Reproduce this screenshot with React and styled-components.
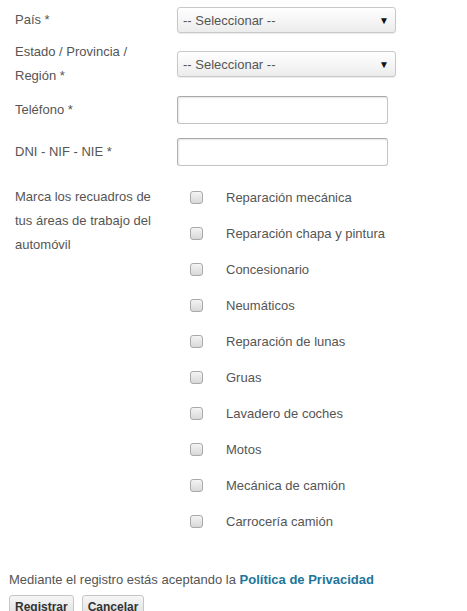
import React from "react";
import styled, { createGlobalStyle } from "styled-components";

const areas = [
  "Reparación mecánica",
  "Reparación chapa y pintura",
  "Concesionario",
  "Neumáticos",
  "Reparación de lunas",
  "Gruas",
  "Lavadero de coches",
  "Motos",
  "Mecánica de camión",
  "Carrocería camión",
];

function App() {
  return (
    <Page>
      <GlobalStyle />
      <Form>
        <Row $pad="7px 0">
          <Label>País *</Label>
          <Select>
            <span>-- Seleccionar --</span>
            <Arrow>▼</Arrow>
          </Select>
        </Row>
        <Row $pad="0">
          <Label>
            Estado / Provincia /
            <br />
            Región *
          </Label>
          <Select>
            <span>-- Seleccionar --</span>
            <Arrow>▼</Arrow>
          </Select>
        </Row>
        <Row $pad="8px 0 6px">
          <Label>Teléfono *</Label>
          <TextInput />
        </Row>
        <Row $pad="8px 0 6px">
          <Label>DNI - NIF - NIE *</Label>
          <TextInput />
        </Row>
        <Row $pad="7px 0 0" $top>
          <Label $pad="6px">
            Marca los recuadros de
            <br />
            tus áreas de trabajo del
            <br />
            automóvil
          </Label>
          <Checks>
            {areas.map((a) => (
              <CheckRow key={a}>
                <Box />
                <CheckText>{a}</CheckText>
              </CheckRow>
            ))}
          </Checks>
        </Row>
      </Form>
      <Notice>
        Mediante el registro estás aceptando la{" "}
        <Link href="#">Política de Privacidad</Link>
      </Notice>
      <Buttons>
        <Button>Registrar</Button>
        <Button>Cancelar</Button>
      </Buttons>
    </Page>
  );
}

const GlobalStyle = createGlobalStyle`
  body {
    margin: 0;
    background: #fff;
    font-family: "Liberation Sans", Arial, sans-serif;
    font-size: 13px;
    color: #555;
  }
`;

const Page = styled.div`
  padding: 0 9px;
`;

const Form = styled.div`
  display: flex;
  flex-direction: column;
`;

const Row = styled.div`
  display: flex;
  align-items: ${(p) => (p.$top ? "flex-start" : "center")};
  padding: ${(p) => p.$pad};
`;

const Label = styled.div`
  width: 162px;
  padding-left: 6px;
  padding-top: ${(p) => p.$pad || "0"};
  line-height: 24px;
  color: #555;
`;

const Select = styled.div`
  box-sizing: border-box;
  width: 219px;
  height: 26px;
  display: flex;
  align-items: center;
  justify-content: space-between;
  padding: 0 6px 0 5px;
  border: 1px solid #c8c8c8;
  border-radius: 3px;
  background: linear-gradient(#ffffff, #ececec);
  box-shadow: 0 1px 1px rgba(0, 0, 0, 0.08);
  color: #555;
  font-size: 13px;
`;

const Arrow = styled.span`
  font-size: 10px;
  color: #111;
`;

const TextInput = styled.div`
  box-sizing: border-box;
  width: 211px;
  height: 28px;
  border: 1px solid #c4c4c4;
  border-top-color: #a8a8a8;
  border-left-color: #b0b0b0;
  border-radius: 3px;
  background: #fff;
  box-shadow: inset 1px 1px 2px rgba(0, 0, 0, 0.1);
`;

const Checks = styled.div`
  display: flex;
  flex-direction: column;
`;

const CheckRow = styled.div`
  display: flex;
  align-items: center;
  height: 36px;
`;

const Box = styled.span`
  box-sizing: border-box;
  width: 13px;
  height: 13px;
  margin: 0 23px 0 13px;
  border: 1px solid #a9a9a9;
  border-radius: 3px;
  background: linear-gradient(#f4f4f4, #d8d8d8);
`;

const CheckText = styled.span`
  color: #555;
`;

const Notice = styled.p`
  margin: 32px 0 0;
  line-height: 18px;
  color: #555;
`;

const Link = styled.a`
  color: #21759b;
  font-weight: bold;
  text-decoration: none;
`;

const Buttons = styled.div`
  display: flex;
  gap: 8px;
  margin-top: 6px;
`;

const Button = styled.button`
  height: 24px;
  padding: 0 5px;
  border: 1px solid #c6c6c6;
  border-radius: 3px;
  background: linear-gradient(#f6f6f6, #dedede);
  font-family: "Liberation Sans", Arial, sans-serif;
  font-size: 12px;
  font-weight: bold;
  color: #333;
`;

export default App;
